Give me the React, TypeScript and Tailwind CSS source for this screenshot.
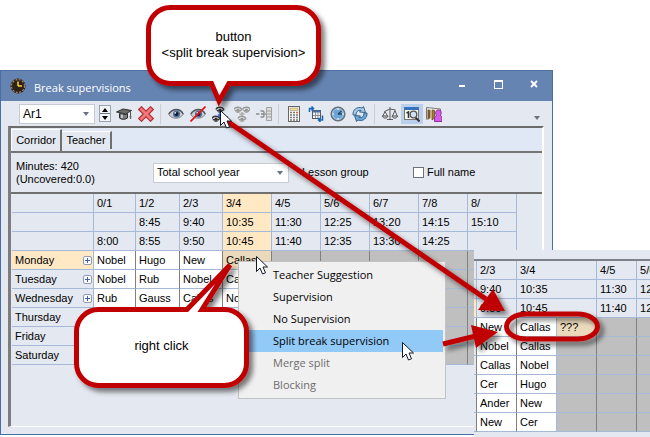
import type { ReactNode } from 'react'
import clsx from 'clsx'

const periods = ['0/1', '1/2', '2/3', '3/4', '4/5', '5/6', '6/7', '7/8', '8/']
const starts = ['', '8:45', '9:40', '10:35', '11:30', '12:25', '13:20', '14:15', '15:10']
const ends = ['8:00', '8:55', '9:50', '10:45', '11:40', '12:35', '13:30', '14:25', '']

const days = [
  { name: 'Monday', expandable: true, cells: ['Nobel', 'Hugo', 'New', 'Callas'] },
  { name: 'Tuesday', expandable: true, cells: ['Nobel', 'Rub', 'Nobel', 'Callas'] },
  { name: 'Wednesday', expandable: true, cells: ['Rub', 'Gauss', 'Callas', 'Nobel'] },
  { name: 'Thursday', expandable: false, cells: ['', '', '', ''] },
  { name: 'Friday', expandable: false, cells: ['', '', '', ''] },
  { name: 'Saturday', expandable: false, cells: ['', '', '', ''] },
]

const splitRows = [
  ['New', 'Callas', '???'],
  ['Nobel', 'Callas', ''],
  ['Callas', 'Nobel', ''],
  ['Cer', 'Hugo', ''],
  ['Ander', 'New', ''],
  ['New', 'Cer', ''],
]

const menuItems = [
  { label: 'Teacher Suggestion' },
  { label: 'Supervision' },
  { label: 'No Supervision' },
  { label: 'Split break supervision', active: true },
  { label: 'Merge split', disabled: true },
  { label: 'Blocking', disabled: true },
]

function Icon({ children, className }: { children: ReactNode; className?: string }) {
  return (
    <svg viewBox="0 0 16 16" className={clsx('size-4 shrink-0', className)} fill="none" aria-hidden="true">
      {children}
    </svg>
  )
}

function Eye() {
  return (
    <g>
      <path d="M.8 8.500C3 5 6 4 8.500 4C12 4 14 6 15.200 8.500C13 11.300 10.500 12.200 8 12.200C5 12.200 2.500 11.300 .8 8.500Z" fill="#c9cbd0" stroke="#85878c" />
      <path d="M.8 8C3 4.500 6 3.500 8.500 3.500C12 3.500 14 5.500 15.200 8" stroke="#55575c" strokeWidth="1.500" />
      <circle cx="8.500" cy="8" r="3.500" fill="#4c6e9c" />
      <circle cx="8.500" cy="8" r="2" fill="#141c2a" />
      <circle cx="7.300" cy="6.800" r=".9" fill="#dce9f8" />
    </g>
  )
}

function MiniEye({ x, y, color }: { x: number; y: number; color: string }) {
  return (
    <g transform={`translate(${x} ${y})`}>
      <path d="M0 2.500C1 -.3 5.500 -.5 7.500 2V3.500" stroke={color} strokeWidth="1.600" />
      <path d="M1 3.500C2.500 6 5.500 6 7 3.500Z" fill="#d4d4d4" stroke={color} />
      <circle cx="4" cy="3.300" r="1.700" fill={color} />
    </g>
  )
}

const tools: { label: string; icon: ReactNode; group: number; pressed?: boolean }[] = [
  {
    label: 'Teachers',
    group: 0,
    icon: (
      <>
        <path d="M.5 6L7 3L15.500 4.500L9.500 8Z" fill="#6d6d6d" stroke="#303030" />
        <path d="M3.500 7.500V12C5 13.500 9 14 11.500 12V7.500L9 8.500Z" fill="#7b7b7b" stroke="#303030" />
        <path d="M6 8.500V12" stroke="#ddd" strokeWidth="1.500" />
        <path d="M14.500 5V10" stroke="#555" />
        <path d="M13.500 10H15.500L15 13H14Z" fill="#666" />
      </>
    ),
  },
  {
    label: 'Delete',
    group: 0,
    icon: (
      <path d="M3.500 .7L8 5.200L12.500 .7L15.300 3.500L10.800 8L15.300 12.500L12.500 15.300L8 10.800L3.500 15.300L.7 12.500L5.200 8L.7 3.500Z" fill="#f07878" stroke="#b8303a" strokeWidth="1.200" />
    ),
  },
  { label: 'Show supervision', group: 1, icon: <Eye /> },
  {
    label: 'Hide supervision',
    group: 1,
    icon: (
      <>
        <Eye />
        <path d="M.5 15.500L15.500 .5" stroke="#ee1111" strokeWidth="1.700" />
      </>
    ),
  },
  {
    label: 'Split break supervision',
    group: 1,
    icon: (
      <>
        <MiniEye x={4} y={1} color="#333" />
        <MiniEye x={0} y={10} color="#333" />
        <MiniEye x={8.5} y={10} color="#333" />
        <path d="M8 6V10M6 8.500L8 10.500L10 8.500" stroke="#2468d8" strokeWidth="1.500" />
      </>
    ),
  },
  {
    label: 'Merge split',
    group: 1,
    icon: (
      <>
        <MiniEye x={0} y={1} color="#989898" />
        <MiniEye x={8.5} y={1} color="#989898" />
        <MiniEye x={4} y={10} color="#989898" />
        <path d="M8 6V10M5.500 8H10.500" stroke="#aaa" strokeWidth="1.500" />
      </>
    ),
  },
  {
    label: 'Supervision list',
    group: 1,
    icon: (
      <>
        <path d="M0 8H3.500M4.500 5H7L8 6V7L7 8L8 9V10L7 11H4.500M5 8H7M8.500 8H10.500" stroke="#8d8d8d" strokeWidth="1.400" />
        <path d="M10.500 1.500H15.500V14.500H10.500ZM10.500 5H15.500M10.500 8H15.500M10.500 11H15.500" fill="#ddd" stroke="#a2a2a2" />
      </>
    ),
  },
  {
    label: 'Calculate',
    group: 2,
    icon: (
      <>
        <rect x="2.500" y=".5" width="11" height="15" fill="#fbfbf5" stroke="#666" />
        <rect x="4" y="2" width="8" height="2.500" fill="#f3dc91" stroke="#888" strokeWidth=".5" />
        <path d="M4 6.500H6M7 6.500H9M4 9H6M7 9H9M4 11.500H6M7 11.500H9M4 14H6M7 14H9M10 9H12M10 11.500H12M10 14H12" stroke="#777" strokeWidth="1.300" />
        <path d="M10 6.500H12" stroke="#ed5628" strokeWidth="1.600" />
      </>
    ),
  },
  {
    label: 'Swap view',
    group: 2,
    icon: (
      <>
        <rect x="4.500" y="4.500" width="8" height="8" fill="#f3f3f3" stroke="#555a66" />
        <path d="M4.500 5.500H12.500" stroke="#4b6fa0" strokeWidth="2" />
        <path d="M7.500 6V12M10 6V12M5 9.500H12" stroke="#8890a0" />
        <path d="M1.500 6V2.500H5.500M3.500 .5L5.500 2.500L3.500 4.500M10.500 14H14.500V9.500M12.500 12L10.500 14L12.500 16" stroke="#1764b4" strokeWidth="1.500" />
      </>
    ),
  },
  {
    label: 'Time',
    group: 2,
    icon: (
      <>
        <circle cx="8" cy="8" r="6.800" fill="#6ca5d5" stroke="#6b7078" strokeWidth="1.600" />
        <circle cx="8" cy="8" r="5.500" stroke="#a5cbea" />
        <path d="M8 2.500V4M8 12V13.500M2.500 8H4M12 8H13.500" stroke="#fff" strokeWidth="1.200" />
        <path d="M8 8L11.500 5M8 8H12" stroke="#284466" strokeWidth="1.300" />
      </>
    ),
  },
  {
    label: 'Refresh',
    group: 2,
    icon: (
      <>
        <path d="M1 9C.5 4 5 0 10 2L11.500 .5L13.500 6.500L7.500 6L9 4.500C6 3.500 4 6 4 9Z" fill="#a9c9e7" stroke="#35648f" />
        <path d="M15 7C15.500 12 11 16 6 14L4.500 15.500L2.500 9.500L8.500 10L7 11.500C10 12.500 12 10 12 7Z" fill="#6fa6da" stroke="#35648f" />
      </>
    ),
  },
  {
    label: 'Balance',
    group: 3,
    icon: (
      <>
        <path d="M8 1V13M5 13.500H11M2.500 5.500L8 3L13.500 4M3 5.500L.8 10M3 5.500L5.500 10M13 4.500L10.500 10M13 4.500L15.200 10" stroke="#5c5c5c" />
        <path d="M.3 10H6C5.500 12.800 1 12.800 .3 10ZM10 10H15.700C15 12.800 10.500 12.800 10 10Z" fill="#ddd" stroke="#505050" />
      </>
    ),
  },
  {
    label: 'Preview',
    group: 3,
    pressed: true,
    icon: (
      <>
        <rect x=".5" y="1.500" width="14" height="12" fill="#f6f6ec" stroke="#777" />
        <path d="M.5 2.500H14.500" stroke="#3472bb" strokeWidth="3" />
        <path d="M2.500 7L4.500 6V12" stroke="#333" strokeWidth="1.500" />
        <path d="M11.500 11.500L15.500 15.500" stroke="#333" strokeWidth="2" />
        <circle cx="9.500" cy="8.500" r="3.300" fill="#cfe0f0" stroke="#555" strokeWidth="1.300" />
      </>
    ),
  },
  {
    label: 'Exit',
    group: 3,
    icon: (
      <>
        <path d="M.5 13.500V1.500L14.500 3V13.500" fill="#f3efe4" stroke="#777" />
        <path d="M1.500 3.500L4.500 4V12L1.500 14Z" fill="#7e5a2c" />
        <path d="M6 4L8.500 4.500V12L6 14Z" fill="#a98330" stroke="#55390d" strokeWidth=".7" />
        <path d="M8.500 15.500V12C8.500 10.500 9.500 10 10.500 9.500C8.500 6.500 10 4 12.500 4C15 4 16 6.500 14.500 9.500C15.500 10 16 10.500 16 12V15.500Z" fill="#d25be8" stroke="#8e2ba5" />
      </>
    ),
  },
]

function Triangle({ className }: { className?: string }) {
  return (
    <svg viewBox="0 0 6 4" className={clsx('h-1 w-1.5', className)} aria-hidden="true">
      <path d="M0 0H6L3 4Z" fill="currentColor" />
    </svg>
  )
}

function Dropdown({ label, value, className }: { label: string; value: string; className: string }) {
  return (
    <div className={clsx('relative', className)}>
      <select
        aria-label={label}
        className="size-full appearance-none border border-[#c5cad3] bg-white pl-[3px] outline-none"
      >
        <option>{value}</option>
      </select>
      <Triangle className="pointer-events-none absolute top-2 right-1.5 text-gray-500" />
    </div>
  )
}

function TitleBar() {
  return (
    <header className="flex h-[30px] items-center bg-[#6684b2] pl-[9px] text-white">
      <Icon>
        <circle cx="8" cy="8" r="7.500" fill="#2d2118" />
        <circle cx="8" cy="8" r="6.500" stroke="#a98a66" strokeWidth="1.200" strokeDasharray="2 1.400" />
        <path d="M8 8V3.500M8 8H12" stroke="#ffd83a" strokeWidth="1.500" />
      </Icon>
      <h1 className="flex-1 pt-1 pl-2 font-['Open_Sans',sans-serif] text-[11px]">Break supervisions</h1>
      <button aria-label="Minimize" className="flex h-full w-9 items-center justify-center">
        <span className="h-0.5 w-1.5 bg-white" />
      </button>
      <button aria-label="Maximize" className="flex h-full w-9 items-center justify-center pb-1">
        <span className="h-[9px] w-[9px] border border-t-2 border-white" />
      </button>
      <button aria-label="Close" className="flex h-full w-9 items-center justify-center pb-1">
        <svg viewBox="0 0 8 8" className="size-2" aria-hidden="true">
          <path d="M1 1L7 7M7 1L1 7" stroke="#fff" strokeWidth="1.800" />
        </svg>
      </button>
    </header>
  )
}

function Toolbar() {
  return (
    <div className="flex h-[25px] items-center bg-[#e4e8f0] pl-[18px]">
      <Dropdown label="Area" value="Ar1" className="h-5 w-[76px] text-[12px]" />
      <div className="mr-0.5 ml-1 flex h-[17px] w-3 flex-col border border-gray-400 bg-gray-100">
        <button aria-label="Next area" className="flex flex-1 items-center justify-center border-b border-gray-500">
          <Triangle className="rotate-180" />
        </button>
        <button aria-label="Previous area" className="flex flex-1 items-center justify-center">
          <Triangle />
        </button>
      </div>
      {[0, 1, 2, 3].map((group) => (
        <div
          key={group}
          className={clsx('flex', group > 0 && 'ml-[3px] border-l border-[#c9ced8] pl-1')}
        >
          {tools
            .filter((tool) => tool.group === group)
            .map((tool) => (
              <button
                key={tool.label}
                aria-label={tool.label}
                className={clsx('flex h-5 w-[22px] items-center justify-center', tool.pressed && 'bg-[#b9cfec]')}
              >
                <Icon>{tool.icon}</Icon>
              </button>
            ))}
        </div>
      ))}
      <button aria-label="More tools" className="mt-2 mr-3 ml-auto">
        <Triangle className="text-gray-500" />
      </button>
    </div>
  )
}

const cell = 'h-[19px] overflow-hidden border-r border-b border-b-[#a6b9d6] p-0 pl-[3px] text-left font-normal whitespace-nowrap'

function BreakTable() {
  return (
    <table className="w-[505px] table-fixed border-separate border-spacing-0 leading-4">
      <colgroup>
        <col className="w-[82px]" />
        <col className="w-[42px]" />
        <col className="w-[44px]" />
        <col className="w-[43px]" />
        {periods.slice(3).map((period) => (
          <col key={period} className="w-[49px]" />
        ))}
      </colgroup>
      <thead>
        {[periods, starts, ends].map((row, i) => (
          <tr key={i}>
            <th className={clsx(cell, 'border-r-[#a6b9d6]')} />
            {row.map((text, col) => (
              <th key={col} className={clsx(cell, 'border-r-[#a6b9d6]', col === 3 && 'bg-[#ffe8c4]')}>
                {text}
              </th>
            ))}
          </tr>
        ))}
      </thead>
      <tbody>
        {days.map((day, row) => (
          <tr key={day.name}>
            <th className={clsx(cell, 'border-r-[#a6b9d6]', row === 0 && 'bg-[#ffe8c4]')}>
              <div className="flex items-center justify-between pr-px">
                {day.name}
                {day.expandable && (
                  <button aria-label={`Expand ${day.name}`} className="rounded-xs border border-[#8f9bb5] bg-white">
                    <svg viewBox="0 0 7 7" className="size-[7px]" aria-hidden="true">
                      <path d="M1 3.500H6M3.500 1V6" stroke="#3d62a8" />
                    </svg>
                  </button>
                )}
              </div>
            </th>
            {periods.map((period, col) => (
              <td
                key={period}
                className={clsx(
                  cell,
                  'border-r-[#808080]',
                  col > 3 ? 'bg-[#bfbfbf]' : row === 0 && col === 3 ? 'bg-[#ead9bb]' : 'bg-white',
                )}
              >
                {day.cells[col]}
              </td>
            ))}
          </tr>
        ))}
      </tbody>
    </table>
  )
}

function BreakWindow() {
  return (
    <section className="mr-[97px] border border-[#4a6ea3] bg-[#e4e8f0] pb-[7px]">
      <TitleBar />
      <Toolbar />
      <div className="mr-2 ml-[7px] border-t-2 border-r-2 border-b border-l-[3px] border-t-[#6b6b6b] border-r-white border-b-white border-l-[#7d7d7d]">
        <div role="tablist" className="flex h-[25px] items-start border-b-2 border-[#747474] bg-[#e0e7f5]">
          <button role="tab" aria-selected="true" className="mt-px h-[22px] w-[51px] border-t border-r-2 border-l border-t-white border-r-[#707070] border-l-white bg-[#e4e8f0]">
            Corridor
          </button>
          <button role="tab" aria-selected="false" className="mt-[3px] h-[18px] w-[50px] border-t border-r-2 border-t-white border-r-[#707070] bg-[#e4e8f0]">
            Teacher
          </button>
        </div>
        <div className="flex h-[39px] items-center">
          <p className="w-[142px] pl-[5px] leading-[13px]">
            Minutes: 420
            <br />
            (Uncovered:0.0)
          </p>
          <Dropdown label="Lesson group" value="Total school year" className="h-5 w-[136px]" />
          <span className="w-[124px] pl-[13px]">Lesson group</span>
          <label className="flex items-center gap-[3px]">
            <input type="checkbox" className="size-[11px] appearance-none border border-gray-500 bg-white" />
            Full name
          </label>
        </div>
        <div className="min-h-[234px] border-t-2 border-[#707070] pl-px">
          <BreakTable />
        </div>
      </div>
    </section>
  )
}

function SplitResult() {
  const head = [
    ['2/3', '3/4', '4/5', '5/6'],
    ['9:40', '10:35', '11:30', '12:25'],
    ['9:50', '10:45', '11:40', '12:35'],
  ]
  return (
    <section className="absolute top-[250px] right-0 left-[474px] overflow-hidden bg-[#e4e8f0] pt-[9px] pb-[5px]">
      <div className="border-t-2 border-[#7d8188]">
        <table className="w-[203px] table-fixed border-separate border-spacing-0 leading-4">
          <colgroup>
            <col className="w-[3px]" />
            <col className="w-10" />
            <col className="w-10" />
            <col className="w-10" />
            <col className="w-10" />
            <col className="w-10" />
          </colgroup>
          <thead>
            {head.map((row, i) => (
              <tr key={i}>
                <th className={clsx('border-r border-b border-[#a6b9d6] p-0', i === 2 && 'bg-[#ffe8c4]')} />
                {row.map((text, col) => (
                  <th key={text} colSpan={col === 1 ? 2 : 1} className={clsx(cell, 'border-r-[#a6b9d6]')}>
                    {text}
                  </th>
                ))}
              </tr>
            ))}
          </thead>
          <tbody>
            {splitRows.map((row, i) => (
              <tr key={i}>
                <td className="border-r border-b border-r-[#808080] border-b-[#a6b9d6] p-0" />
                <td className={clsx(cell, 'border-r-[#808080] bg-white')}>{row[0]}</td>
                <td className={clsx(cell, 'border-r-[#a6b9d6] bg-white')}>{row[1]}</td>
                <td className={clsx(cell, 'border-r-[#808080]', row[2] ? 'bg-[#ead9bb]' : 'bg-[#bfbfbf]')}>
                  {row[2]}
                </td>
                <td className={clsx(cell, 'border-r-[#808080] bg-[#bfbfbf]')} />
                <td className={clsx(cell, 'border-r-[#808080] bg-[#bfbfbf]')} />
              </tr>
            ))}
          </tbody>
        </table>
      </div>
    </section>
  )
}

function ContextMenu() {
  return (
    <div
      role="menu"
      className="absolute top-[261px] left-[238px] flex w-52 flex-col border border-[#c3c3c3] bg-[#f0f0f0] p-0.5 font-['Open_Sans',sans-serif] text-[11px]"
    >
      {menuItems.map((item) => (
        <button
          key={item.label}
          role="menuitem"
          disabled={item.disabled}
          className={clsx(
            'h-[22px] pl-8 text-left whitespace-nowrap',
            item.active && 'bg-[#91c9f7]',
            item.disabled && 'text-[#6d6d6d]',
          )}
        >
          {item.label}
        </button>
      ))}
    </div>
  )
}

function Cursor({ x, y }: { x: number; y: number }) {
  return (
    <path
      transform={`translate(${x} ${y})`}
      d="M.5 .5V15.500L4 12L6.500 18L9.500 16.800L7 11H11.500Z"
      fill="#fff"
      stroke="#111827"
    />
  )
}

function Annotations() {
  return (
    <>
      <svg
        viewBox="0 0 650 437"
        className="pointer-events-none absolute top-0 left-0 h-[437px] w-[650px]"
        aria-hidden="true"
      >
        <defs>
          <filter id="shadow" x="-20%" y="-20%" width="150%" height="150%">
            <feDropShadow dx="4" dy="4" stdDeviation="2.500" floodColor="#000" floodOpacity=".5" />
          </filter>
        </defs>
        <g filter="url(#shadow)" fill="#c00000">
          <path d="M224 119L486 299" stroke="#c00000" strokeWidth="5" />
          <path d="M493 289L505 311L478 310Z" />
          <path d="M443 344L480 335" stroke="#c00000" strokeWidth="5" />
          <path d="M471 325L498 332L476 348Z" />
          <rect x="506.500" y="314" width="91" height="25" rx="20" ry="12.500" fill="none" stroke="#c00000" strokeWidth="5" />
        </g>
        <g filter="url(#shadow)" fill="#fff" stroke="#c00000" strokeWidth="5">
          <path d="M170.500 7.500H296.500A22 22 0 0 1 318.500 29.500V61.500A22 22 0 0 1 296.500 83.500H229L219 101L211.500 83.500H170.500A22 22 0 0 1 148.500 61.500V29.500A22 22 0 0 1 170.500 7.500Z" />
          <path d="M98.500 309.500H187L230 265L202 309.500H224.500A22 22 0 0 1 246.500 331.500V363.500A22 22 0 0 1 224.500 385.500H98.500A22 22 0 0 1 76.500 363.500V331.500A22 22 0 0 1 98.500 309.500Z" />
        </g>
        <Cursor x={220} y={110} />
        <Cursor x={256} y={256} />
        <Cursor x={402} y={342} />
      </svg>
      <p className="absolute top-[29px] left-[151px] w-[165px] text-center text-[13px] leading-4">
        button
        <br />
        &lt;split break supervision&gt;
      </p>
      <p className="absolute top-[338px] left-[79px] w-[165px] text-center text-[13px] leading-4">right click</p>
    </>
  )
}

export default function App() {
  return (
    <main className="relative overflow-hidden bg-white pt-[70px] pb-0.5 font-['Liberation_Sans',Arial,sans-serif] text-[11px] text-black">
      <BreakWindow />
      <ContextMenu />
      <SplitResult />
      <Annotations />
    </main>
  )
}
